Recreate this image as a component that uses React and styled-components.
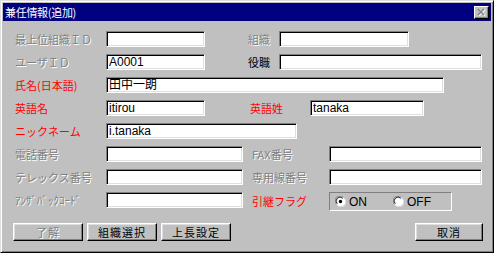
import React from 'react';
import styled, { createGlobalStyle } from 'styled-components';

const GlobalStyle = createGlobalStyle`
  html, body {
    margin: 0;
    padding: 0;
    background: #ffffff;
  }
  body {
    font-family: "Noto Sans CJK JP", "Liberation Sans", sans-serif;
    font-size: 11px;
  }
`;

const Window = styled.div`
  width: 494px;
  height: 253px;
  box-sizing: border-box;
  background: #c0c0c0;
  border: 1px solid;
  border-color: #dfdfdf #000 #000 #dfdfdf;
  box-shadow: inset 1px 1px 0 #fff, inset -1px -1px 0 #808080;
  padding: 2px;
  display: flex;
  flex-direction: column;
`;

const TitleBar = styled.div`
  height: 18px;
  background: #000080;
  color: #fff;
  display: flex;
  align-items: center;
  justify-content: space-between;
  padding: 0 2px 0 2px;
  font-size: 11px;
  letter-spacing: -0.3px;
`;

const CloseButton = styled.div`
  width: 15px;
  height: 13px;
  box-sizing: border-box;
  background: #c0c0c0;
  border: 1px solid;
  border-color: #fff #000 #000 #fff;
  box-shadow: inset -1px -1px 0 #808080;
  display: flex;
  align-items: center;
  justify-content: center;
`;

const Content = styled.div`
  padding: 10px 8px 0 10px;
  display: flex;
  flex-direction: column;
  gap: 7px;
`;

const Row = styled.div`
  display: flex;
  align-items: ${(p) => (p.$top ? 'flex-start' : 'center')};
  height: ${(p) => p.$h || 16}px;
`;

const Label = styled.div`
  width: ${(p) => p.$w}px;
  margin-left: ${(p) => p.$ml || 0}px;
  padding-left: ${(p) => (p.$ml ? 0 : 2)}px;
  box-sizing: border-box;
  height: ${(p) => p.$h || 16}px;
  line-height: ${(p) => p.$h || 16}px;
  white-space: nowrap;
  color: ${(p) => (p.$tone === 'red' ? '#ff0000' : p.$tone === 'off' ? '#808080' : '#000')};
  text-shadow: ${(p) => (p.$tone === 'off' ? '1px 1px 0 #fff' : 'none')};
`;

const Field = styled.div`
  width: ${(p) => p.$w}px;
  height: 16px;
  box-sizing: border-box;
  background: #fff;
  border: 1px solid;
  border-color: #808080 #fff #fff #808080;
  box-shadow: inset 1px 1px 0 #000, inset -1px -1px 0 #dfdfdf;
  padding: 0 2px;
  font-family: "Liberation Sans", "Noto Sans CJK JP", sans-serif;
  font-size: 12px;
  line-height: 14px;
  color: #000;
  white-space: nowrap;
  overflow: hidden;
`;

const GroupBox = styled.div`
  width: 123px;
  height: 19px;
  box-sizing: border-box;
  border: 1px solid;
  border-color: #808080 #fff #fff #808080;
  display: flex;
  align-items: center;
  padding-left: 5px;
  font-family: "Liberation Sans", sans-serif;
  font-size: 12px;
`;

const Option = styled.label`
  width: 62px;
  display: flex;
  align-items: center;
  gap: 3px;
  color: #000;
`;

const Footer = styled.div`
  display: flex;
  justify-content: space-between;
  margin-top: 12px;
  padding: 0 8px 0 10px;
`;

const ButtonGroup = styled.div`
  display: flex;
  gap: 4px;
`;

const Button = styled.div`
  width: ${(p) => p.$w || 70}px;
  height: 18px;
  box-sizing: border-box;
  background: #c0c0c0;
  border: 1px solid;
  border-color: #fff #000 #000 #fff;
  box-shadow: inset -1px -1px 0 #808080, inset 1px 1px 0 #dfdfdf;
  display: flex;
  align-items: center;
  justify-content: center;
  letter-spacing: 1px;
  color: ${(p) => (p.$off ? '#808080' : '#000')};
  text-shadow: ${(p) => (p.$off ? '1px 1px 0 #fff' : 'none')};
`;

const Radio = ({ on }) => (
  <svg width="11" height="11" viewBox="0 0 12 12">
    <circle cx="6" cy="6" r="5.5" fill="#fff" />
    <path d="M1.5 9 A5 5 0 0 1 9 1.5" stroke="#808080" strokeWidth="1" fill="none" />
    <path d="M2.5 8.5 A4 4 0 0 1 8.5 2.5" stroke="#000" strokeWidth="1" fill="none" />
    <path d="M3 10.5 A5 5 0 0 0 10.5 3" stroke="#dfdfdf" strokeWidth="1" fill="none" />
    {on && <circle cx="6" cy="6" r="1.8" fill="#000" />}
  </svg>
);

const CloseIcon = () => (
  <svg width="9" height="8" viewBox="0 0 9 8">
    <path d="M1 1 L7 7 M7 1 L1 7" stroke="#fff" strokeWidth="1.5" transform="translate(1 0.6)" />
    <path d="M1 1 L7 7 M7 1 L1 7" stroke="#808080" strokeWidth="1.5" />
  </svg>
);

export default function App() {
  return (
    <>
      <GlobalStyle />
      <Window>
        <TitleBar>
          <span>兼任情報(追加)</span>
          <CloseButton>
            <CloseIcon />
          </CloseButton>
        </TitleBar>
        <Content>
          <Row>
            <Label $w={93} $tone="off">最上位組織ＩＤ</Label>
            <Field $w={99} />
            <Label $w={31} $ml={43} $tone="off">組織</Label>
            <Field $w={130} />
          </Row>
          <Row>
            <Label $w={93} $tone="off">ユーザＩＤ</Label>
            <Field $w={99}>A0001</Field>
            <Label $w={31} $ml={43}>役職</Label>
            <Field $w={203} />
          </Row>
          <Row>
            <Label $w={93} $tone="red">氏名(日本語)</Label>
            <Field $w={338}>田中一朗</Field>
          </Row>
          <Row>
            <Label $w={93} $tone="red">英語名</Label>
            <Field $w={99}>itirou</Field>
            <Label $w={60} $ml={45} $tone="red">英語姓</Label>
            <Field $w={114}>tanaka</Field>
          </Row>
          <Row>
            <Label $w={93} $tone="red">ニックネーム</Label>
            <Field $w={191}>i.tanaka</Field>
          </Row>
          <Row>
            <Label $w={93} $tone="off">電話番号</Label>
            <Field $w={137} />
            <Label $w={77} $ml={9} $tone="off">FAX番号</Label>
            <Field $w={153} />
          </Row>
          <Row>
            <Label $w={93} $tone="off">テレックス番号</Label>
            <Field $w={137} />
            <Label $w={77} $ml={9} $tone="off">専用線番号</Label>
            <Field $w={153} />
          </Row>
          <Row $h={19} $top>
            <Label $w={93} $tone="off">ｱﾝｻﾞﾊﾞｯｸｺｰﾄﾞ</Label>
            <Field $w={137} />
            <Label $w={77} $ml={9} $h={19} $tone="red">引継フラグ</Label>
            <GroupBox>
              <Option>
                <Radio on />
                ON
              </Option>
              <Option>
                <Radio />
                OFF
              </Option>
            </GroupBox>
          </Row>
        </Content>
        <Footer>
          <ButtonGroup>
            <Button $off>了解</Button>
            <Button>組織選択</Button>
            <Button>上長設定</Button>
          </ButtonGroup>
          <Button $w={68}>取消</Button>
        </Footer>
      </Window>
    </>
  );
}
